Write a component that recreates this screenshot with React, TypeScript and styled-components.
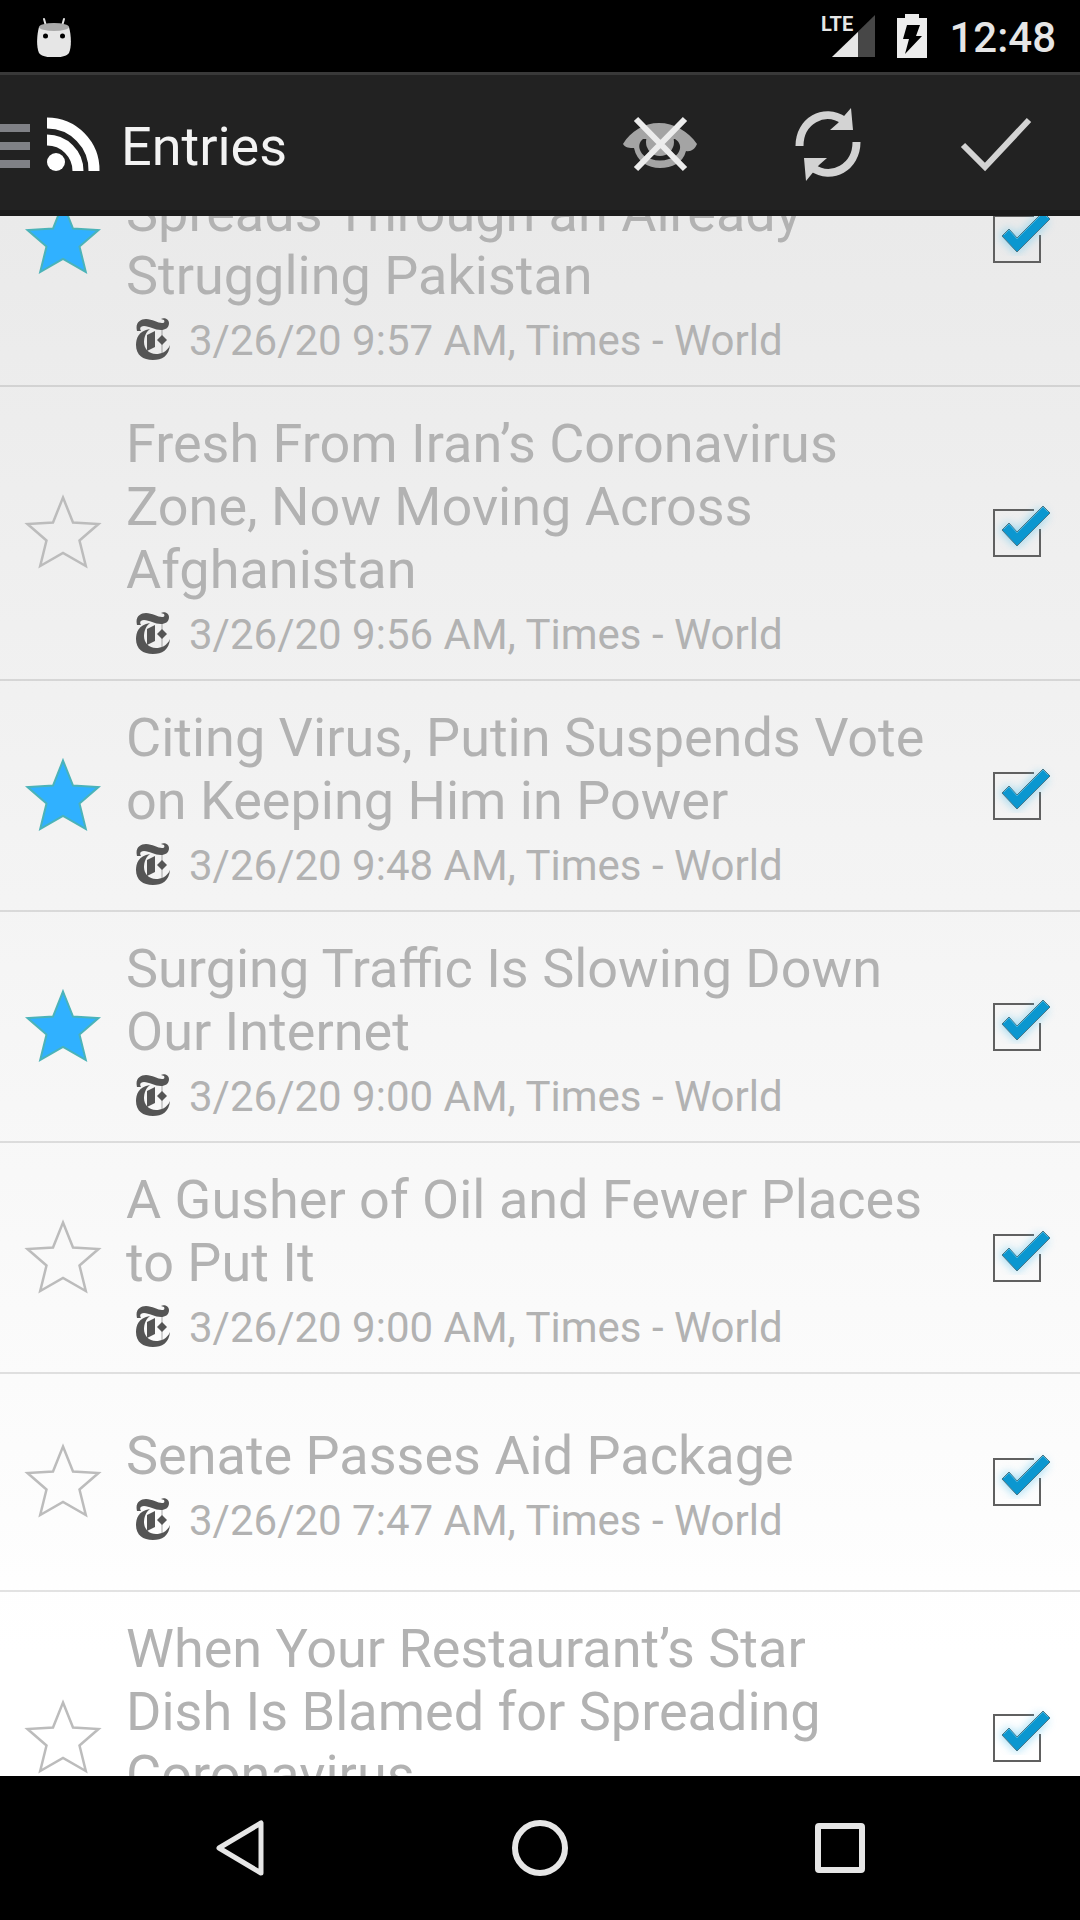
import React from "react";
import styled, { createGlobalStyle } from "styled-components";

const GlobalStyle = createGlobalStyle`
  *, *::before, *::after { box-sizing: border-box; }
  html, body, #root { height: 100%; }
  body { margin: 0; background: #000; font-family: Roboto, "Liberation Sans", sans-serif; }
`;

const Screen = styled.div`
  display: flex;
  flex-direction: column;
  height: 100vh;
  overflow: hidden;
`;

const StatusBar = styled.div`
  flex: none;
  display: flex;
  align-items: center;
  justify-content: space-between;
  height: 72px;
  padding: 0 24px 0 36px;
  background: #000;
`;

const StatusGroup = styled.div`
  display: flex;
  align-items: center;
  gap: 22px;
`;

const SignalText = styled.text`
  font-family: "Liberation Sans Narrow", Roboto, sans-serif;
  font-size: 20px;
  font-weight: 700;
  fill: #e6e6e6;
`;

const Clock = styled.time`
  padding-top: 3px;
  font-size: 42px;
  font-weight: 500;
  line-height: 48px;
  color: #e6e6e6;
`;

const AppBar = styled.header`
  flex: none;
  display: flex;
  align-items: center;
  height: 144px;
  box-shadow: inset 0 3px #393939, inset 0 -6px #1b1b1b;
  background: #222;
`;

const IconButton = styled.button<{ $width: number }>`
  display: flex;
  align-items: center;
  justify-content: center;
  width: ${(p) => p.$width}px;
  height: 100%;
  padding: 0;
  border: 0;
  background: none;
`;

const HomeButton = styled(IconButton)`
  justify-content: flex-start;
  gap: 12px;
`;

const Title = styled.h1`
  flex: 1;
  margin: 0;
  padding-top: 4px;
  font-size: 54px;
  font-weight: 400;
  line-height: 63px;
  color: #f3f3f3;
`;

const Entries = styled.main`
  flex: 1;
  min-height: 0;
  overflow: hidden;
  background: linear-gradient(#eaeaea, #fff 92%);
`;

const EntryList = styled.ul`
  margin: -123px 0 0;
  padding: 0;
  list-style: none;
`;

const Entry = styled.li`
  display: flex;
  align-items: center;
  min-height: 218px;
  padding: 24px 0;
  border-bottom: 2px solid rgba(0, 0, 0, 0.11);
`;

const EntryText = styled.div`
  flex: 1;
  min-width: 0;
  padding-top: 1px;
`;

const Headline = styled.h2<{ $scrolledLines: number }>`
  margin: 0;
  padding-top: ${(p) => p.$scrolledLines * 63}px;
  font-size: 54px;
  font-weight: 400;
  line-height: 63px;
  white-space: pre-line;
  color: #b2b2b2;
`;

const Meta = styled.p`
  display: flex;
  align-items: center;
  gap: 18px;
  height: 54px;
  margin: 0;
  padding: 12px 0 0 9px;
  font-size: 42px;
  line-height: 49px;
  color: #b2b2b2;
`;

const CheckLabel = styled.label`
  position: relative;
  display: flex;
  width: 99px;
  height: 96px;
`;

const CheckInput = styled.input`
  position: absolute;
  inset: 0;
  width: 100%;
  height: 100%;
  margin: 0;
  appearance: none;
`;

const NavBar = styled.nav`
  flex: none;
  display: flex;
  justify-content: center;
  height: 144px;
  background: #000;
`;

function Star({ on }: { on: boolean }) {
  return (
    <svg width="78" height="80" viewBox="0 0 78 80" aria-hidden="true">
      <path
        d="M39 4.500 L49 29.500 L74.500 31 L55.500 47.500 L61.800 73 L39 60 L16.200 73 L22.500 47.500 L3.500 31 L29 29.500 Z"
        fill={on ? "#30b1ff" : "none"}
        stroke={on ? "#4bb3b8" : "#bcbcbc"}
        strokeWidth={on ? 2 : 2.5}
      />
    </svg>
  );
}

function TimesIcon() {
  return (
    <svg width="36" height="44" viewBox="0 0 36 44" aria-hidden="true" fill="#555">
      <path d="M2 13C0 5 5 1 11 1c6 0 12 4 16 4 2 0 3-1 2-3l-3-1c3-2 8 0 8 4 0 5-4 7-8 7-6 0-12-4-17-4-3 0-5 2-3 5z" />
      <path d="M15 11C3 13 1 21 1 27c0 10 7 15 17 15 9 0 16-4 17-15-3 7-9 9-14 9-7 0-12-5-12-12 0-5 2-10 6-13z" />
      <path d="M12 17l8-4v16l-8 4z" />
      <path d="M27 17l5 5-5 5-5-5z" />
      <path d="M26.500 12h1v23h-1z" opacity=".5" />
    </svg>
  );
}

function CheckMark() {
  return (
    <svg width="99" height="96" viewBox="0 0 99 96" aria-hidden="true">
      <defs>
        <filter id="glow" x="-40%" y="-40%" width="180%" height="180%">
          <feGaussianBlur stdDeviation="5" />
        </filter>
      </defs>
      <path d="M53 25H13V71H59V44" fill="none" stroke="#606060" strokeWidth="2" />
      <path d="M23 41l13 13 27-27" fill="none" stroke="#5cc4ee" strokeWidth="12" opacity=".6" filter="url(#glow)" />
      <path d="M21 45l7-7 8 9 26-26 7 7-33 33z" fill="#0b97d0" stroke="#4a7686" strokeWidth="1" />
      <path d="M23 44l5-5 8 9 26-26 5 5" fill="none" stroke="#45b4de" strokeWidth="1" />
    </svg>
  );
}

type Item = { title: string; time?: string; starred?: boolean; scrolled?: number };

const items: Item[] = [
  { title: "Spreads Through an Already\nStruggling Pakistan", time: "3/26/20 9:57 AM", starred: true, scrolled: 1 },
  { title: "Fresh From Iran’s Coronavirus\nZone, Now Moving Across\nAfghanistan", time: "3/26/20 9:56 AM" },
  { title: "Citing Virus, Putin Suspends Vote\non Keeping Him in Power", time: "3/26/20 9:48 AM", starred: true },
  { title: "Surging Traffic Is Slowing Down\nOur Internet", time: "3/26/20 9:00 AM", starred: true },
  { title: "A Gusher of Oil and Fewer Places\nto Put It", time: "3/26/20 9:00 AM" },
  { title: "Senate Passes Aid Package", time: "3/26/20 7:47 AM" },
  { title: "When Your Restaurant’s Star\nDish Is Blamed for Spreading\nCoronavirus" },
];

export default function App() {
  return (
    <Screen>
      <GlobalStyle />
      <StatusBar>
        <svg width="36" height="42" viewBox="0 0 36 42" aria-hidden="true">
          <path d="M8 4l2 7M28 4l-2 7" stroke="#e4e4e4" strokeWidth="2" strokeLinecap="round" />
          <path d="M3 12C1 19 0 31 3 38c3 6 27 6 30 0 3-7 2-19 0-26z" fill="#e6e6e6" />
          <ellipse cx="18" cy="12" rx="15" ry="4" fill="#aaa" />
          <circle cx="9.500" cy="21" r="2.500" />
          <circle cx="26.500" cy="21" r="2.500" />
        </svg>
        <StatusGroup>
          <svg width="54" height="44" viewBox="0 0 54 44" role="img" aria-label="LTE signal">
            <SignalText x="0" y="17">LTE</SignalText>
            <path d="M54 1V43H11z" fill="#474747" />
            <path d="M37 18V43H11z" fill="#e6e6e6" />
          </svg>
          <svg width="30" height="44" viewBox="0 0 30 44" aria-hidden="true">
            <path d="M8 0h14v4h8v40H0V4h8z" fill="#ededed" />
            <path d="M10 11h13l-4 11h6L8 40l4-15H6z" fill="#000" />
          </svg>
          <Clock>12:48</Clock>
        </StatusGroup>
      </StatusBar>

      <AppBar>
        <HomeButton $width={121} aria-label="Open menu">
          <svg width="34" height="58" viewBox="0 0 34 58" aria-hidden="true">
            <path d="M0 13h30M0 31h30M0 49h30" stroke="#808186" strokeWidth="8" />
          </svg>
          <svg width="56" height="56" viewBox="0 0 56 56" aria-hidden="true">
            <circle cx="10" cy="46" r="9" fill="#fff" />
            <path d="M1 24a31 31 0 0 1 31 31M1 7a47 47 0 0 1 47 48" fill="none" stroke="#fff" strokeWidth="11" />
          </svg>
        </HomeButton>
        <Title>Entries</Title>
        <IconButton $width={168} aria-label="Hide read">
          <svg width="78" height="60" viewBox="0 0 78 60" aria-hidden="true">
            <path d="M2 30C10 17 23 9 38 9s29 8 38 21c-2 5-6 8-11 7-3 12-14 17-26 17S16 48 13 34C9 34 4 34 2 30z" fill="#a4a4a4" />
            <path d="M22 25c-8 6-2 18 8 20 6 2 12 2 18 0 10-2 16-14 6-20" fill="#222" />
            <circle cx="39" cy="28" r="14" fill="#a4a4a4" />
            <path d="M15 5l49 50M64 5L15 55" stroke="#ececec" strokeWidth="6" />
          </svg>
        </IconButton>
        <IconButton $width={168} aria-label="Refresh">
          <svg width="68" height="76" viewBox="0 0 68 76" aria-hidden="true">
            <path d="M5.500 40C5.500 15 30 1 50 14.500M62.500 36C62.500 61 38 75 18 61.500" fill="none" stroke="#d3d3d3" strokeWidth="8" />
            <path d="M57 2l2 22H36l8-7zM12 75L10 52h23l-8 7z" fill="#d3d3d3" />
          </svg>
        </IconButton>
        <IconButton $width={168} aria-label="Mark all read">
          <svg width="72" height="56" viewBox="0 0 72 56" aria-hidden="true">
            <path d="M3 29l22 22L69 4" fill="none" stroke="#d3d3d3" strokeWidth="6" />
          </svg>
        </IconButton>
      </AppBar>

      <Entries>
        <EntryList>
          {items.map((item) => (
            <Entry key={item.title}>
              <IconButton $width={126} aria-label="Star" aria-pressed={!!item.starred}>
                <Star on={!!item.starred} />
              </IconButton>
              <EntryText>
                <Headline $scrolledLines={item.scrolled ?? 0}>{item.title}</Headline>
                <Meta>
                  {item.time && (
                    <>
                      <TimesIcon />
                      <span>{item.time}, Times - World</span>
                    </>
                  )}
                </Meta>
              </EntryText>
              <CheckLabel>
                <CheckInput type="checkbox" defaultChecked aria-label="Read" />
                <CheckMark />
              </CheckLabel>
            </Entry>
          ))}
        </EntryList>
      </Entries>

      <NavBar>
        <IconButton $width={300} aria-label="Back">
          <svg width="60" height="60" viewBox="0 0 60 60" aria-hidden="true">
            <path d="M51 5V55L9 30z" fill="none" stroke="#e6e6e6" strokeWidth="5" strokeLinejoin="round" />
          </svg>
        </IconButton>
        <IconButton $width={300} aria-label="Home">
          <svg width="60" height="60" viewBox="0 0 60 60" aria-hidden="true">
            <circle cx="30" cy="30" r="25" fill="none" stroke="#e6e6e6" strokeWidth="6" />
          </svg>
        </IconButton>
        <IconButton $width={300} aria-label="Recent apps">
          <svg width="60" height="60" viewBox="0 0 60 60" aria-hidden="true">
            <rect x="8" y="8" width="44" height="44" rx="1" fill="none" stroke="#e6e6e6" strokeWidth="6" />
          </svg>
        </IconButton>
      </NavBar>
    </Screen>
  );
}
